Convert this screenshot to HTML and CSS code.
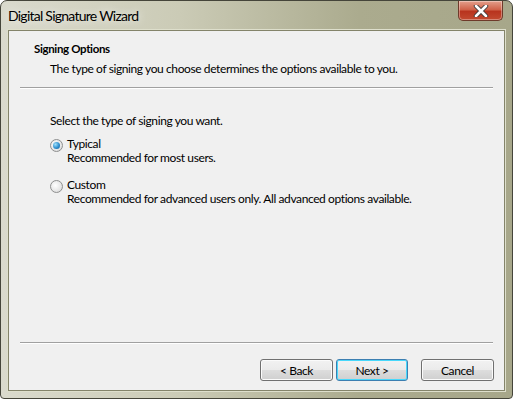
FILE: index.html
```html
<!DOCTYPE html>
<html>
<head>
    <title>Digital Signature Wizard</title>
    <link rel="stylesheet" href="styles.css">
</head>
<body>
    <div class="window">
        <div class="titlebar">
            <span class="title">Digital Signature Wizard</span>
            <div class="close">
                <svg width="18" height="12" viewBox="0 0 18 12">
                    <path d="M4 1 L14 11 M14 1 L4 11" stroke="#3a3a3a" stroke-width="4.4" stroke-linecap="round"/>
                    <path d="M4 1 L14 11 M14 1 L4 11" stroke="#ffffff" stroke-width="2.6" stroke-linecap="round"/>
                </svg>
            </div>
        </div>
        <div class="client">
            <div class="header">
                <div class="heading">Signing Options</div>
                <div class="subtitle">The type of signing you choose determines the options available to you.</div>
            </div>
            <div class="rule"></div>
            <div class="content">
                <div class="prompt">Select the type of signing you want.</div>
                <label class="option">
                    <span class="radio checked"></span>
                    <span class="option-text">
                        <span>Typical</span>
                        <span>Recommended for most users.</span>
                    </span>
                </label>
                <label class="option">
                    <span class="radio"></span>
                    <span class="option-text">
                        <span>Custom</span>
                        <span>Recommended for advanced users only. All advanced options available.</span>
                    </span>
                </label>
            </div>
            <div class="rule"></div>
            <div class="buttons">
                <button>&lt; Back</button>
                <button class="default">Next &gt;</button>
                <button class="cancel">Cancel</button>
            </div>
        </div>
    </div>
</body>
</html>
```

FILE: styles.css
```css
body {
    margin: 0;
    font-family: Lato, "Liberation Sans", sans-serif;
    font-size: 12px;
    letter-spacing: -0.4px;
    color: #000;
    background: #fff;
}

.window {
    width: 513px;
    height: 399px;
    box-sizing: border-box;
    border: 1px solid #45453a;
    border-radius: 7px 7px 4px 4px;
    background: linear-gradient(to right, #dadacd 0%, #cbcbb6 35%, #abab8e 70%, #a7a78a 100%);
    display: flex;
    flex-direction: column;
    padding: 0 7px 7px 7px;
}

.titlebar {
    height: 29px;
    display: flex;
    align-items: flex-start;
    justify-content: space-between;
    flex-shrink: 0;
}

.title {
    font-size: 14px;
    letter-spacing: -0.75px;
    line-height: 30px;
    color: #000;
    text-shadow: 0 0 8px rgba(255,255,255,0.9);
}

.close {
    width: 43px;
    height: 19px;
    margin-right: 2px;
    border: 1px solid #6e3a2a;
    border-top: none;
    border-radius: 0 0 5px 5px;
    background: linear-gradient(to bottom, #e4a08c 0%, #d0634a 45%, #b8341e 55%, #c24a30 100%);
    display: flex;
    align-items: center;
    justify-content: center;
    box-shadow: inset 0 0 0 1px rgba(255,255,255,0.35);
}

.close svg {
    display: block;
}

.client {
    flex: 1;
    background: #f0f0f0;
    border: 1px solid #84846a;
    box-shadow: 0 0 0 1px #dedfcc;
    display: flex;
    flex-direction: column;
    padding: 0 10px;
}

.header {
    padding: 10px 0 0 15px;
    height: 46px;
}

.heading {
    font-weight: bold;
    font-size: 11.5px;
    letter-spacing: -0.35px;
    line-height: 16px;
}

.subtitle {
    padding-left: 16px;
    line-height: 16px;
    margin-top: 4px;
}

.rule {
    height: 1px;
    background: #a0a0a0;
    border-bottom: 1px solid #fff;
    margin: 0 1px;
}

.content {
    flex: 1;
    padding: 24px 0 0 31px;
}

.prompt {
    line-height: 16px;
    margin-bottom: 8px;
}

.option {
    display: flex;
    gap: 4px;
    margin-bottom: 13px;
}

.radio {
    width: 11px;
    height: 11px;
    margin-top: 2px;
    border: 1px solid #8e8f8f;
    border-radius: 50%;
    background: radial-gradient(circle at 40% 40%, #ffffff 0%, #e6e6e6 60%, #cfcfcf 100%);
    position: relative;
    flex-shrink: 0;
}

.radio.checked::after {
    content: "";
    position: absolute;
    left: 2px;
    top: 2px;
    width: 7px;
    height: 7px;
    border-radius: 50%;
    background: radial-gradient(circle at 35% 35%, #9fe0fa 0%, #2f8fcf 55%, #155c90 100%);
}

.option-text {
    display: flex;
    flex-direction: column;
    line-height: 14px;
}

.buttons {
    display: flex;
    justify-content: flex-end;
    gap: 3px;
    padding: 15px 0 0 0;
    height: 46px;
    box-sizing: border-box;
}

button {
    width: 73px;
    height: 22px;
    font-family: inherit;
    font-size: 12px;
    letter-spacing: inherit;
    color: #000;
    border: 1px solid #707070;
    border-radius: 3px;
    background: linear-gradient(to bottom, #f2f2f2 0%, #ebebeb 48%, #dddddd 52%, #cfcfcf 100%);
    box-shadow: inset 0 0 0 1px #fbfbfb;
    padding: 0;
}

button.default {
    width: 72px;
    border-color: #3c7fb1;
    box-shadow: inset 0 0 0 1px #48d8fb;
}

button.cancel {
    margin-left: 10px;
}
```
